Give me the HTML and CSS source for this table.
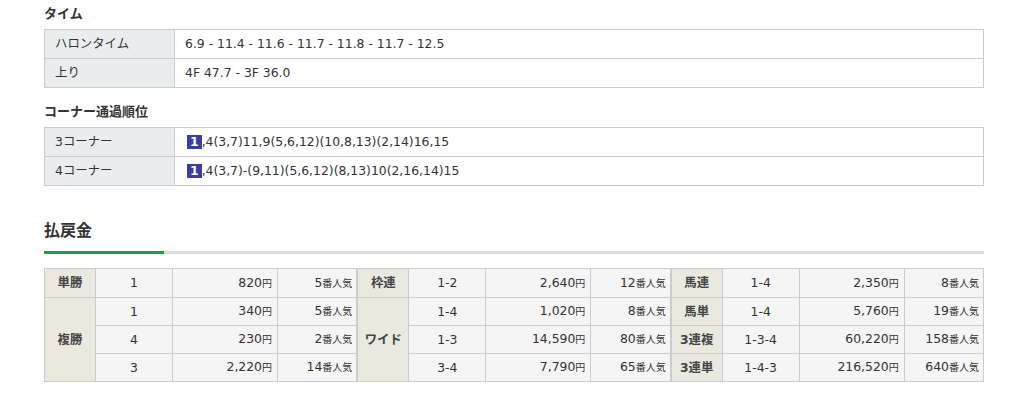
FILE: index.html
```html
<!DOCTYPE html>
<html lang="ja">
<head>
<meta charset="utf-8">
<link rel="stylesheet" href="styles.css">
</head>
<body>
<div class="wrap">
  <h3 class="sub-title">タイム</h3>
  <table class="info">
    <tr><th>ハロンタイム</th><td>6.9 - 11.4 - 11.6 - 11.7 - 11.8 - 11.7 - 12.5</td></tr>
    <tr><th>上り</th><td>4F 47.7 - 3F 36.0</td></tr>
  </table>

  <h3 class="sub-title second">コーナー通過順位</h3>
  <table class="info">
    <tr><th>3コーナー</th><td><span class="badge">1</span>,4(3,7)11,9(5,6,12)(10,8,13)(2,14)16,15</td></tr>
    <tr><th>4コーナー</th><td><span class="badge">1</span>,4(3,7)-(9,11)(5,6,12)(8,13)10(2,16,14)15</td></tr>
  </table>

  <h2 class="pay-title">払戻金</h2>
  <div class="pay-line"></div>

  <div class="pay-wrap">
    <table class="pay">
      <colgroup><col class="c-th"><col class="c-num"><col class="c-yen"><col></colgroup>
      <tr class="first"><th>単勝</th><td class="num">1</td><td class="yen">820<small>円</small></td><td class="nin">5<small>番人気</small></td></tr>
      <tr class="dot"><th rowspan="3">複勝</th><td class="num">1</td><td class="yen">340<small>円</small></td><td class="nin">5<small>番人気</small></td></tr>
      <tr class="dot"><td class="num">4</td><td class="yen">230<small>円</small></td><td class="nin">2<small>番人気</small></td></tr>
      <tr><td class="num">3</td><td class="yen">2,220<small>円</small></td><td class="nin">14<small>番人気</small></td></tr>
    </table>
    <table class="pay">
      <colgroup><col class="c-th"><col class="c-num"><col class="c-yen"><col></colgroup>
      <tr class="first"><th>枠連</th><td class="num">1-2</td><td class="yen">2,640<small>円</small></td><td class="nin">12<small>番人気</small></td></tr>
      <tr class="dot"><th rowspan="3">ワイド</th><td class="num">1-4</td><td class="yen">1,020<small>円</small></td><td class="nin">8<small>番人気</small></td></tr>
      <tr class="dot"><td class="num">1-3</td><td class="yen">14,590<small>円</small></td><td class="nin">80<small>番人気</small></td></tr>
      <tr><td class="num">3-4</td><td class="yen">7,790<small>円</small></td><td class="nin">65<small>番人気</small></td></tr>
    </table>
    <table class="pay">
      <colgroup><col class="c-th"><col class="c-num"><col class="c-yen"><col></colgroup>
      <tr class="first"><th>馬連</th><td class="num">1-4</td><td class="yen">2,350<small>円</small></td><td class="nin">8<small>番人気</small></td></tr>
      <tr><th>馬単</th><td class="num">1-4</td><td class="yen">5,760<small>円</small></td><td class="nin">19<small>番人気</small></td></tr>
      <tr><th>3連複</th><td class="num">1-3-4</td><td class="yen">60,220<small>円</small></td><td class="nin">158<small>番人気</small></td></tr>
      <tr><th>3連単</th><td class="num">1-4-3</td><td class="yen">216,520<small>円</small></td><td class="nin">640<small>番人気</small></td></tr>
    </table>
  </div>
</div>
</body>
</html>
```
FILE: styles.css
```css
html, body {
  margin: 0;
  padding: 0;
  background: #fff;
}
body {
  font-family: "DejaVu Sans", "Noto Sans CJK JP", sans-serif;
  font-size: 12.4px;
  color: #333;
}
.wrap {
  width: 940px;
  padding: 4px 0 0 44px;
}
.sub-title {
  margin: 0 0 5px;
  font-size: 13px;
  line-height: 20px;
  font-weight: bold;
  color: #333;
}
.sub-title.second {
  margin-top: 14px;
}
.info {
  width: 940px;
  border-collapse: collapse;
  table-layout: fixed;
}
.info th, .info td {
  border: 1px solid #ccc;
  height: 28px;
  padding: 0 10px;
  text-align: left;
  vertical-align: middle;
  font-weight: normal;
  line-height: 16px;
}
.info th {
  width: 109px;
  background: #eaedf0;
}
.badge {
  display: inline-block;
  background: #3a3f9f;
  color: #fff;
  font-weight: bold;
  padding: 0 3px;
  line-height: 14px;
  margin-left: 2px;
}
.pay-title {
  margin: 33px 0 0;
  font-size: 16px;
  line-height: 24px;
  font-weight: bold;
  color: #333;
  padding-bottom: 8px;
}
.pay-line {
  height: 3px;
  background: linear-gradient(to right, #1aa532 120px, #dddddd 120px);
}
.pay-wrap {
  display: flex;
  margin-top: 14px;
}
.pay {
  flex: 1 1 0;
  width: 313px;
  border-collapse: collapse;
  table-layout: fixed;
  border: 1px solid #ccc;
}
.c-th { width: 51px; }
.c-num { width: 77px; }
.c-yen { width: 105px; }
.pay th, .pay td {
  border: 1px solid #ccc;
  height: 27px;
  padding: 0;
  vertical-align: middle;
  line-height: 16px;
}
.pay tr.first th, .pay tr.first td {
  height: 28px;
}
.pay th {
  background: #e9e9df;
  color: #444;
  font-weight: bold;
  text-align: center;
}
.pay td {
  background: #f5f5f5;
}
.pay tr.dot td {
  border-bottom: 1px dashed #ccc;
}
.num { text-align: center; }
.yen { text-align: right; padding-right: 5px !important; }
.nin { text-align: right; padding-right: 4px !important; }
.pay small {
  font-size: 10px;
}
```
